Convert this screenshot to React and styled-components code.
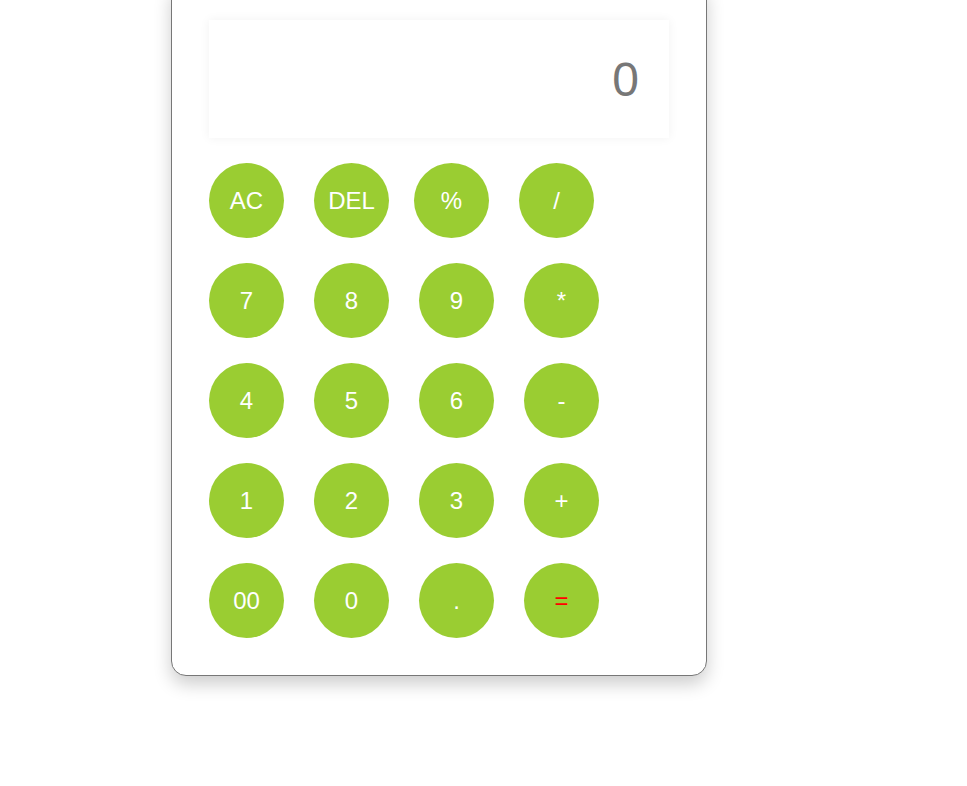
import React from 'react'
import styled, { createGlobalStyle } from 'styled-components';

const GlobalStyle = createGlobalStyle`
  body {
    margin: 0;
    background: #fff;
    font-family: "Liberation Sans", Arial, sans-serif;
  }
`;

const Page = styled.div`
  min-height: 100vh;
  padding-bottom: 80px;
  box-sizing: border-box;
  display: flex;
  align-items: flex-start;
`;

const Card = styled.div`
  box-sizing: border-box;
  width: 536px;
  margin: -18px 0 0 171px;
  padding: 37px;
  border: 1px solid #777;
  border-radius: 15px;
  background: #fff;
  box-shadow: 0 8px 18px rgba(0, 0, 0, 0.2);
  display: flex;
  flex-direction: column;
  gap: 25px;
`;

const Display = styled.div`
  box-sizing: border-box;
  width: 460px;
  height: 118px;
  padding-right: 30px;
  display: flex;
  align-items: center;
  justify-content: flex-end;
  font-size: 48px;
  color: #777;
  background: #fff;
  box-shadow: 0 0 10px rgba(0, 0, 0, 0.06);
`;

const Row = styled.div`
  display: flex;
`;

const Key = styled.button`
  width: 75px;
  height: 75px;
  margin-right: ${p => (p.$tight ? '25px' : '30px')};
  padding: 0;
  border: none;
  border-radius: 50%;
  background-color: #9acd32;
  color: ${p => (p.$accent ? 'red' : 'white')};
  font-family: "Liberation Sans", Arial, sans-serif;
  font-size: 24px;
  display: flex;
  align-items: center;
  justify-content: center;
  cursor: pointer;
`;

const rows = [
  ['AC', 'DEL', '%', '/'],
  ['7', '8', '9', '*'],
  ['4', '5', '6', '-'],
  ['1', '2', '3', '+'],
  ['00', '0', '.', '='],
];

function App() {
  return (
    <Page>
      <GlobalStyle />
      <Card>
        <Display>0</Display>
        {rows.map((row, i) => (
          <Row key={i}>
            {row.map(k => (
              <Key key={k} $tight={k === 'DEL'} $accent={k === '='}>
                {k}
              </Key>
            ))}
          </Row>
        ))}
      </Card>
    </Page>
  )
}

export default App;
